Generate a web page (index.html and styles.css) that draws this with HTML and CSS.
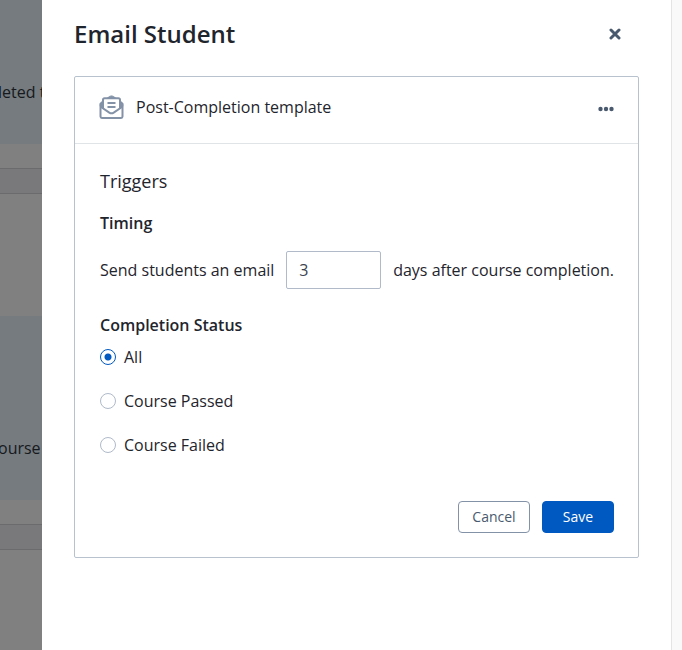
FILE: index.html
```
<!DOCTYPE html>
<html lang="en">
<head>
  <meta charset="UTF-8">
  <meta name="viewport" content="width=device-width, initial-scale=1">
  <title>Email Student</title>
  <link rel="stylesheet" href="styles.css">
</head>
<body>

  <div class="layout">
    <div class="backdrop">
      <div class="row row-first"><span>leted t</span></div>
      <div class="row-footer"></div>
      <div class="row-gap"></div>
      <div class="row row-second"><span>ourse</span></div>
      <div class="row-footer"></div>
    </div>

    <main class="drawer">
      <header class="drawer-header">
        <h1>Email Student</h1>
        <button type="button" class="icon-button" aria-label="Close">
          <svg width="12" height="12" viewBox="0 0 12 12">
            <path d="M2 2L10 10M10 2L2 10" fill="none" stroke="#4a5a6e" stroke-width="3" stroke-linecap="round"/>
          </svg>
        </button>
      </header>

      <form class="card">
        <div class="card-header">
          <svg class="mail-icon" width="25" height="25" viewBox="0 0 25 25" fill="none" stroke="#8392a7" stroke-width="2" stroke-linejoin="round" stroke-linecap="round">
            <path d="M3.5 7L1.5 8.8V21.6Q1.5 23 2.9 23H22.1Q23.5 23 23.5 21.6V8.8L21.5 7"/>
            <path d="M4 13V4.8Q4 3.2 5.6 3.2H19.4Q21 3.2 21 4.8V13"/>
            <path d="M8.5 3L10.6 1.4Q12.5 .4 14.4 1.4L16.5 3Z" fill="#8392a7" stroke-width="1"/>
            <path d="M2 12L10.3 17.6Q12.5 19 14.7 17.6L23 12"/>
            <path d="M8.5 8H16.5M8.5 12H16.5" stroke-linecap="butt"/>
            <path d="M1.5 9L4 7V13L1.5 11.5ZM23.5 9L21 7V13L23.5 11.5Z" fill="#8392a7" stroke-width="1"/>
          </svg>
          <span class="card-title">Post-Completion template</span>
          <button type="button" class="icon-button" aria-label="More options">
            <svg width="16" height="8" viewBox="0 0 16 8" fill="#4a5a6e">
              <circle cx="2.5" cy="3" r="2.2"/>
              <circle cx="8" cy="3" r="2.2"/>
              <circle cx="13.5" cy="3" r="2.2"/>
            </svg>
          </button>
        </div>

        <div class="card-body">
          <h2>Triggers</h2>
          <h3>Timing</h3>
          <div class="timing">
            <label for="days">Send students an email</label>
            <input type="text" id="days" name="days" value="3" inputmode="numeric">
            <span>days after course completion.</span>
          </div>

          <fieldset>
            <legend>Completion Status</legend>
            <label class="option"><input type="radio" name="status" value="all" checked>All</label>
            <label class="option"><input type="radio" name="status" value="passed">Course Passed</label>
            <label class="option"><input type="radio" name="status" value="failed">Course Failed</label>
          </fieldset>

          <div class="actions">
            <button type="button" class="btn btn-cancel">Cancel</button>
            <button type="submit" class="btn btn-save">Save</button>
          </div>
        </div>
      </form>
    </main>

    <div class="scroll-track"></div>
  </div>

</body>
</html>
```

FILE: styles.css
```
* {
  box-sizing: border-box;
}

body {
  margin: 0;
  font-family: "Open Sans", sans-serif;
  font-size: 16px;
  line-height: 24px;
  color: #1f252d;
  background: #fff;
}

h1, h2, h3 {
  margin: 0;
}

.layout {
  display: flex;
  min-height: 100vh;
}

/* dimmed page behind the drawer */
.backdrop {
  flex: 0 0 42px;
  overflow: hidden;
  background: #808080;
  color: #16191d;
}

.row {
  display: flex;
  background: #757b7f;
  white-space: nowrap;
  text-indent: -2px;
}

.row-first {
  padding: 80px 0 40px;
}

.row-second {
  padding: 120px 0 40px;
}

.row-footer {
  height: 26px;
  margin-top: 24px;
  background: #79797b;
  border-top: 1px solid #6b6b6d;
  border-bottom: 1px solid #6b6b6d;
}

.row-gap {
  height: 122px;
}

.drawer {
  flex: 1;
  min-width: 0;
  padding: 16px 32px;
}

.drawer-header {
  display: flex;
  align-items: center;
  justify-content: space-between;
  padding-right: 18px;
  margin-bottom: 24px;
}

.drawer-header h1 {
  font-size: 24px;
  line-height: 36px;
  font-weight: 600;
}

.icon-button {
  display: flex;
  padding: 0;
  border: none;
  background: none;
  cursor: pointer;
}

.card {
  border: 1px solid #b8c2ce;
  border-radius: 2px;
}

.card-header {
  display: flex;
  align-items: center;
  height: 67px;
  padding: 0 24px;
  border-bottom: 1px solid #e1e4e7;
}

.mail-icon {
  margin-bottom: 6px;
}

.card-title {
  flex: 1;
  margin: 0 12px 6px;
}

.card-body {
  padding: 23px 24px 24px 25px;
}

h2 {
  font-size: 18px;
  line-height: 28px;
  font-weight: 400;
}

h3 {
  margin-top: 16px;
  font-size: 16px;
  font-weight: 600;
}

.timing {
  display: flex;
  align-items: center;
  gap: 12px;
  margin-top: 16px;
  white-space: nowrap;
}

.timing input {
  flex: 1 1 0;
  width: 0;
  min-width: 48px;
  height: 38px;
  padding: 0 12px;
  border: 1px solid #b0bac9;
  border-radius: 2px;
  font: inherit;
  color: #3c444e;
}

fieldset {
  margin: 24px 0 0;
  padding: 0;
  border: none;
}

legend {
  padding: 0;
  margin-bottom: 8px;
  font-weight: 600;
}

.option {
  display: flex;
  align-items: center;
  gap: 8px;
  margin-bottom: 20px;
}

.option input {
  appearance: none;
  width: 16px;
  height: 16px;
  margin: 0;
  border: 1px solid #b0bac9;
  border-radius: 50%;
}

.option input:checked {
  border-color: #0059c1;
  background: radial-gradient(circle, #0059c1 3px, #fff 4px);
}

.actions {
  display: flex;
  justify-content: flex-end;
  gap: 12px;
  margin-top: 24px;
}

.btn {
  width: 72px;
  height: 32px;
  padding: 0;
  border: 1px solid #8392a7;
  border-radius: 4px;
  font: inherit;
  font-size: 14px;
  cursor: pointer;
}

.btn-cancel {
  background: #fff;
  color: #4a5a6e;
}

.btn-save {
  background: #0059c1;
  border-color: #0059c1;
  color: #fff;
  font-weight: 500;
}

.scroll-track {
  flex: 0 0 11px;
  background: #f9f9f9;
  border-left: 1px solid #e4e4e4;
}
```
